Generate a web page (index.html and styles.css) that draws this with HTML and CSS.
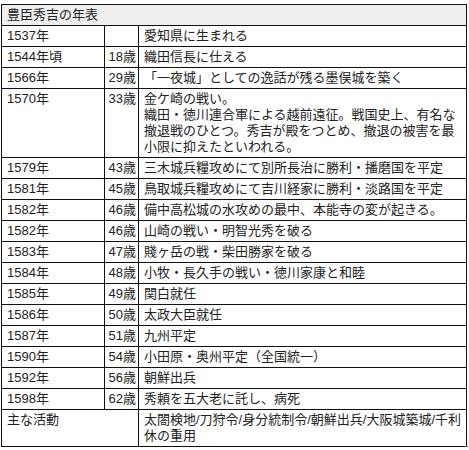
FILE: index.html
```html
<!DOCTYPE html>
<html lang="ja">
<head>
<meta charset="utf-8">
<link rel="stylesheet" href="styles.css">
</head>
<body>
<div class="wrap">
<table class="nenpyo">
  <colgroup>
    <col class="c-year">
    <col class="c-age">
    <col class="c-event">
  </colgroup>
  <tr class="head"><td colspan="3">豊臣秀吉の年表</td></tr>
  <tr><td>1537年</td><td class="age"></td><td>愛知県に生まれる</td></tr>
  <tr><td>1544年頃</td><td class="age">18歳</td><td>織田信長に仕える</td></tr>
  <tr><td>1566年</td><td class="age">29歳</td><td>「一夜城」としての逸話が残る墨俣城を築く</td></tr>
  <tr><td>1570年</td><td class="age">33歳</td><td>金ケ崎の戦い。<br>織田・徳川連合軍による越前遠征。戦国史上、有名な<br>撤退戦のひとつ。秀吉が殿をつとめ、撤退の被害を最<br>小限に抑えたといわれる。</td></tr>
  <tr><td>1579年</td><td class="age">43歳</td><td>三木城兵糧攻めにて別所長治に勝利・播磨国を平定</td></tr>
  <tr><td>1581年</td><td class="age">45歳</td><td>鳥取城兵糧攻めにて吉川経家に勝利・淡路国を平定</td></tr>
  <tr><td>1582年</td><td class="age">46歳</td><td>備中高松城の水攻めの最中、本能寺の変が起きる。</td></tr>
  <tr><td>1582年</td><td class="age">46歳</td><td>山崎の戦い・明智光秀を破る</td></tr>
  <tr><td>1583年</td><td class="age">47歳</td><td>賤ヶ岳の戦・柴田勝家を破る</td></tr>
  <tr><td>1584年</td><td class="age">48歳</td><td>小牧・長久手の戦い・徳川家康と和睦</td></tr>
  <tr><td>1585年</td><td class="age">49歳</td><td>関白就任</td></tr>
  <tr><td>1586年</td><td class="age">50歳</td><td>太政大臣就任</td></tr>
  <tr><td>1587年</td><td class="age">51歳</td><td>九州平定</td></tr>
  <tr><td>1590年</td><td class="age">54歳</td><td>小田原・奥州平定（全国統一）</td></tr>
  <tr><td>1592年</td><td class="age">56歳</td><td>朝鮮出兵</td></tr>
  <tr><td>1598年</td><td class="age">62歳</td><td>秀頼を五大老に託し、病死</td></tr>
  <tr><td colspan="2">主な活動</td><td>太閤検地/刀狩令/身分統制令/朝鮮出兵/大阪城築城/千利<br>休の重用</td></tr>
</table>
<div class="handle"></div>
</div>
</body>
</html>
```
FILE: styles.css
```css
html, body {
  margin: 0;
  padding: 0;
  background: #ffffff;
}
body {
  font-family: "Liberation Sans", "Noto Sans CJK JP", sans-serif;
  font-size: 13px;
  color: #222222;
}
.wrap {
  position: relative;
  padding: 4px 0 0 1px;
}
.nenpyo {
  border-collapse: collapse;
  table-layout: fixed;
  width: 465px;
}
.c-year { width: 103px; }
.c-age { width: 34px; }
.c-event { width: 328px; }
.nenpyo td {
  border: 1px solid #111111;
  padding: 2px 4px 2px 5px;
  line-height: 16px;
  vertical-align: top;
  overflow: hidden;
  white-space: nowrap;
}
.nenpyo td.age {
  text-align: right;
  padding: 2px 2px 2px 0;
}
.nenpyo .head td {
  background: #eeeeee;
}
.handle {
  position: absolute;
  left: 465px;
  top: 446px;
  width: 3px;
  height: 3px;
  background: #3b78ae;
}
```
